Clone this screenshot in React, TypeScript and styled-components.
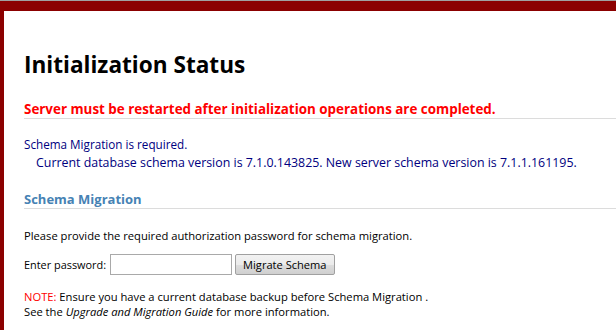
import React from 'react';
import styled, { createGlobalStyle } from 'styled-components';

const GlobalStyle = createGlobalStyle`
    html, body {
        margin: 0;
        padding: 0;
        background: #ffffff;
    }
    body {
        font-family: 'Open Sans', 'DejaVu Sans', sans-serif;
        font-size: 11.2px;
        color: #000000;
    }
`;

const StyledFrame = styled.div`
    border-top: 1px solid #a0a0a0;
    min-height: 329px;
    box-sizing: border-box;
`;

const StyledFrameInner = styled.div`
    border-top: 10px solid #8b0000;
    border-left: 4px solid #8b0000;
    min-height: 329px;
    box-sizing: border-box;
    padding: 38px 0 0 20px;
`;

const StyledTitle = styled.h1`
    margin: 0;
    font-size: 22.6px;
    font-weight: 700;
    line-height: 32px;
    color: #000000;
`;

const StyledSectionHeading = styled.div<{ $color: string }>`
    margin-top: ${(props) => (props.$color === 'red' ? '19px' : '19px')};
    font-size: ${(props) => (props.$color === 'red' ? '13.4px' : '13px')};
    font-weight: 700;
    line-height: 18px;
    color: ${(props) => (props.$color === 'red' ? '#ff0000' : '#4682b4')};
    border-bottom: 1px solid #dcdcdc;
    padding-bottom: 0;
`;

const StyledStatusBlock = styled.div`
    margin-top: 17px;
    color: #000080;
    font-size: 11.7px;
    line-height: 17px;
`;

const StyledIndentedLine = styled.div`
    padding: 1px 0 0 12px;
    font-size: 12.4px;
`;

const StyledParagraph = styled.p`
    margin: 18px 0 0;
    line-height: 17px;
`;

const StyledFormRow = styled.div`
    display: flex;
    align-items: center;
    margin-top: 10px;
    gap: 3px;
`;

const StyledFormLabel = styled.span`
    font-size: 10.9px;
`;

const StyledInput = styled.input`
    width: 122px;
    height: 21px;
    box-sizing: border-box;
    border: 1px solid #a9a9a9;
    margin: 0 0 0 1px;
    padding: 0 2px;
    font-family: inherit;
`;

const StyledButton = styled.button`
    height: 21px;
    box-sizing: border-box;
    padding: 0 7px;
    font-family: inherit;
    font-size: 11.1px;
    color: #000000;
    border: 1px solid #a0a0a0;
    border-radius: 2px;
    background: linear-gradient(#f2f2f2, #ebebeb 50%, #dddddd 51%, #cfcfcf);
`;

const StyledNote = styled.div`
    margin-top: 14px;
    line-height: 15px;
`;

const StyledNoteLabel = styled.span`
    color: #ff0000;
`;

export default function App() {
    return (
        <>
            <GlobalStyle />
            <StyledFrame>
                <StyledFrameInner>
                    <StyledTitle>Initialization Status</StyledTitle>
                    <StyledSectionHeading $color="red">
                        Server must be restarted after initialization operations are completed.
                    </StyledSectionHeading>
                    <StyledStatusBlock>
                        <div>Schema Migration is required.</div>
                        <StyledIndentedLine>
                            Current database schema version is 7.1.0.143825. New server schema version is 7.1.1.161195.
                        </StyledIndentedLine>
                    </StyledStatusBlock>
                    <StyledSectionHeading $color="blue">Schema Migration</StyledSectionHeading>
                    <StyledParagraph>Please provide the required authorization password for schema migration.</StyledParagraph>
                    <StyledFormRow>
                        <StyledFormLabel>Enter password:</StyledFormLabel>
                        <StyledInput type="password" />
                        <StyledButton>Migrate Schema</StyledButton>
                    </StyledFormRow>
                    <StyledNote>
                        <div>
                            <StyledNoteLabel>NOTE:</StyledNoteLabel> Ensure you have a current database backup before Schema Migration .
                        </div>
                        <div>
                            See the <i>Upgrade and Migration Guide</i> for more information.
                        </div>
                    </StyledNote>
                </StyledFrameInner>
            </StyledFrame>
        </>
    );
}
